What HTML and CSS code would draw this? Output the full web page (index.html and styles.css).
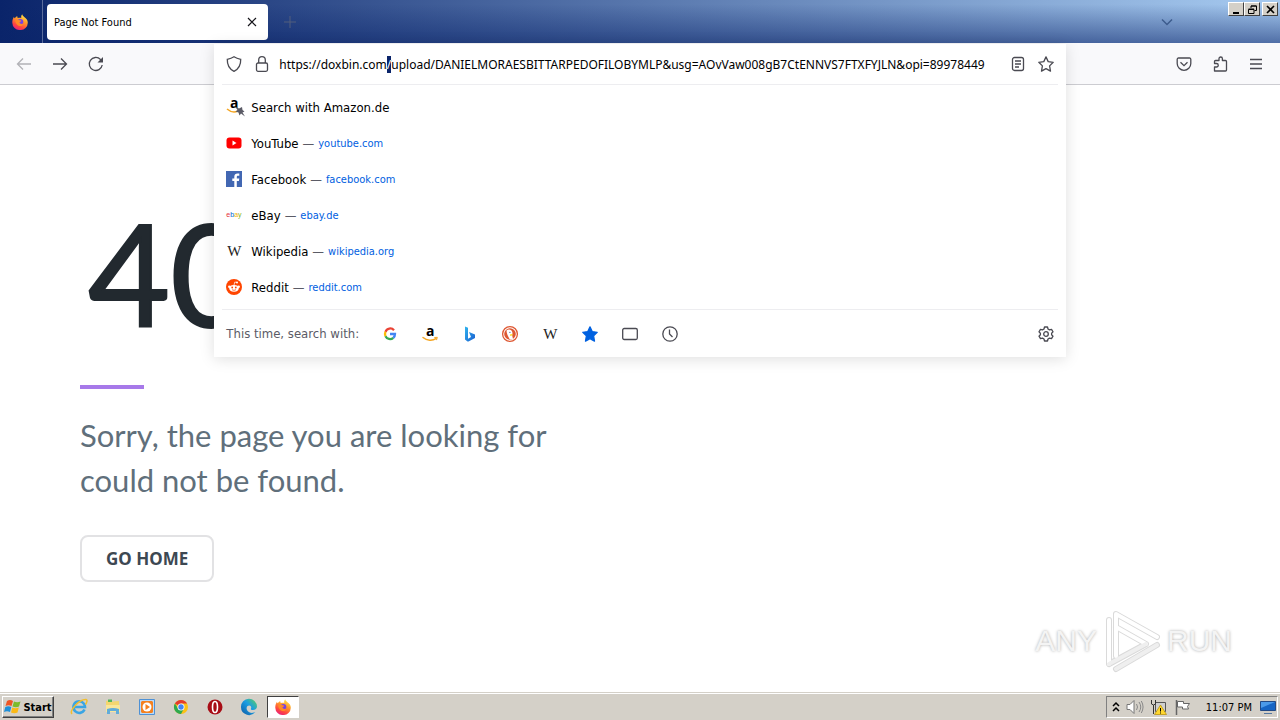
FILE: index.html
```html
<!DOCTYPE html>
<html lang="en">
<head>
    <meta charset="UTF-8">
    <meta name="viewport" content="width=device-width, initial-scale=1.0">
    <title>Page Not Found</title>
    <link rel="stylesheet" href="styles.css">
</head>
<body>
    <!-- Shared icons -->
    <svg class="defs" aria-hidden="true">
        <defs>
            <linearGradient id="flame" x1="0.8" y1="0" x2="0.3" y2="1">
                <stop offset="0" stop-color="#fff14f"/>
                <stop offset="0.4" stop-color="#ff9a2a"/>
                <stop offset="0.75" stop-color="#ff4640"/>
                <stop offset="1" stop-color="#e8207c"/>
            </linearGradient>
            <linearGradient id="bing-blue" x1="0" y1="0" x2="1" y2="1">
                <stop offset="0" stop-color="#2fb4ee"/>
                <stop offset="1" stop-color="#1b5fd0"/>
            </linearGradient>
            <linearGradient id="edge-blue" x1="0" y1="1" x2="1" y2="0">
                <stop offset="0" stop-color="#0c59a4"/>
                <stop offset="0.55" stop-color="#1b9de2"/>
                <stop offset="1" stop-color="#5fd35a"/>
            </linearGradient>
        </defs>
        <symbol id="firefox" viewBox="0 0 16 16">
            <path d="M10.2 0.3c0.2 1.2 1 1.900 2 2.600C14.500 4.500 15.800 6.200 15.800 8.800A7.700 7.200 0 0 1 0.300 8.800C0.200 6.500 0.900 4.200 2 2.700c0.100 0.800 0.300 1.200 0.700 1.600C3.500 3.400 4.300 2.500 5.200 2c0 0.900 0.200 1.500 0.700 2C7 3.500 8.700 3.500 9.300 4 8.900 2.700 9.200 1.300 10.200 0.300z" fill="url(#flame)"/>
            <circle cx="8.300" cy="8" r="3" fill="#7542e5"/>
            <path d="M3 6.500c1.600-1.400 3.300-1 4.600-0.200 1 0.100 1.800 0.200 1.700 0.700C9 7.700 7.800 7.700 7.500 8.500c0.400 1.400 2.300 1.900 4.200 0.700C11 12 8.300 12.700 6 11.400 4.300 10.400 3.600 8.500 3 6.500z" fill="#ff8a26"/>
        </symbol>
    </svg>

    <header class="titlebar">
        <button class="firefox-view" aria-label="Firefox View"><svg width="16" height="16"><use href="#firefox"/></svg></button>
        <div class="tab">
            <span>Page Not Found</span>
            <button class="tab-close" aria-label="Close tab"><svg width="10" height="10" viewBox="0 0 10 10"><path d="M1 1l8 8M9 1L1 9" stroke="#15141a" stroke-width="1.200"/></svg></button>
        </div>
        <button class="new-tab" aria-label="New tab"><svg width="12" height="12" viewBox="0 0 12 12"><path d="M6 0v12M0 6h12" stroke="#535f7c"/></svg></button>
        <button class="list-tabs" aria-label="List all tabs"><svg width="12" height="8" viewBox="0 0 12 8"><path d="M1 1.500l5 5 5-5" fill="none" stroke="#3d5c8d" stroke-width="1.500"/></svg></button>
        <div class="window-buttons">
            <button aria-label="Minimize"><svg width="9" height="9" viewBox="0 0 9 9"><path d="M1 7h6v2H1z"/></svg></button>
            <button aria-label="Restore"><svg width="9" height="9" viewBox="0 0 9 9"><path d="M3 3V1h5.500v4.500H6.500M3 1h5.500M0.500 4.500h5.500v4H0.500zM0.500 4h5.500" fill="none" stroke="#000"/></svg></button>
            <button class="close" aria-label="Close"><svg width="9" height="9" viewBox="0 0 9 9"><path d="M1 1l7 7M8 1L1 8" stroke="#000" stroke-width="1.600"/></svg></button>
        </div>
    </header>

    <nav class="toolbar">
        <div class="nav-buttons">
            <button class="back" aria-label="Back" disabled><svg width="16" height="16" viewBox="0 0 16 16"><path d="M15 8H1.500M7 2.500L1.500 8 7 13.500"/></svg></button>
            <button aria-label="Forward"><svg width="16" height="16" viewBox="0 0 16 16"><path d="M1 8h13.500M9 2.500L14.500 8 9 13.500"/></svg></button>
            <button aria-label="Reload"><svg width="16" height="16" viewBox="0 0 16 16"><path d="M14.200 9A6.500 6.500 0 1 1 12.500 3.500L14 5"/><path d="M15 1v5.500H9.500z" class="solid"/></svg></button>
        </div>
        <div class="urlbar-slot">
            <div class="urlbar">
                <div class="url-row">
                    <svg width="16" height="16" viewBox="0 0 16 16"><path d="M8 0.800c2 1.300 4 2 6.700 2.500C14.900 9 12.500 13.200 8 15.300 3.500 13.200 1.100 9 1.300 3.300 4 2.800 6 2.100 8 0.800z"/></svg>
                    <svg width="16" height="16" viewBox="0 0 16 16"><rect x="2.500" y="7" width="11" height="8.300" rx="1.500"/><path d="M4.700 7V4a3.300 3.300 0 0 1 6.600 0v3"/></svg>
                    <input type="text" id="url" aria-label="Address" spellcheck="false" value="https://doxbin.com/upload/DANIELMORAESBITTARPEDOFILOBYMLP&amp;usg=AOvVaw008gB7CtENNVS7FTXFYJLN&amp;opi=89978449">
                    <button aria-label="Reader view"><svg width="16" height="16" viewBox="0 0 16 16"><rect x="2.500" y="1.500" width="11" height="13" rx="2"/><path d="M5 5h6M5 8h6M5 11h4"/></svg></button>
                    <button aria-label="Bookmark this page"><svg width="16" height="16" viewBox="0 0 16 16"><path d="M8 0.900l2.200 4.700 5 0.700-3.600 3.600 0.900 5.200L8 12.600l-4.500 2.500 0.900-5.200L0.800 6.300l5-0.700z" stroke-linejoin="round"/></svg></button>
                </div>
                <ul class="results">
                    <li>
                        <svg class="pinned" width="20" height="20" viewBox="0 0 20 20"><text x="4" y="11" class="amazon-a">a</text><path d="M1 12c4 3.400 8 3.400 11 2" stroke="#f5a623" stroke-width="1.500"/><path d="M9 9.500l4 2 3-1.500 0.500 3 2 1.500-2 1 2.500 4-4-3-1.500 2-1-3-3-1 2-1.500z" fill="#5b5b66" stroke="none"/></svg>
                        <span class="title">Search with Amazon.de</span>
                    </li>
                    <li>
                        <svg width="16" height="16" viewBox="0 0 16 16"><rect x="0.500" y="2.500" width="15" height="11" rx="3" fill="#f00" stroke="none"/><path d="M6.500 5.500v5l4-2.500z" fill="#fff" stroke="none"/></svg>
                        <span class="title">YouTube</span><span class="dash">—</span><a href="https://youtube.com">youtube.com</a>
                    </li>
                    <li>
                        <svg width="16" height="16" viewBox="0 0 16 16"><path d="M0 0h16v16H0z" fill="#4267b2" stroke="none"/><path d="M8.300 16V10H6.300V7.500h2V5.700c0-2.200 1.300-3.300 3.200-3.300h1.800v2.300h-1.200c-1 0-1.300 0.500-1.300 1.200v1.600h2.500L12.900 10h-2.100v6z" fill="#fff" stroke="none"/></svg>
                        <span class="title">Facebook</span><span class="dash">—</span><a href="https://facebook.com">facebook.com</a>
                    </li>
                    <li>
                        <span class="ebay"><i>e</i><i>b</i><i>a</i><i>y</i></span>
                        <span class="title">eBay</span><span class="dash">—</span><a href="https://ebay.de">ebay.de</a>
                    </li>
                    <li>
                        <span class="wiki">W</span>
                        <span class="title">Wikipedia</span><span class="dash">—</span><a href="https://wikipedia.org">wikipedia.org</a>
                    </li>
                    <li>
                        <svg width="16" height="16" viewBox="0 0 16 16"><circle cx="8" cy="8" r="8" fill="#ff4500" stroke="none"/><g fill="#fff" stroke="none"><ellipse cx="8" cy="9.300" rx="4.700" ry="3.400"/><circle cx="3.300" cy="7.700" r="1.200"/><circle cx="12.700" cy="7.700" r="1.200"/><circle cx="11" cy="3.500" r="1"/></g><path d="M8 6l0.800-3 2.200 0.500" stroke="#fff" stroke-width="0.700"/><g fill="#ff4500" stroke="none"><circle cx="6.200" cy="8.500" r="0.900"/><circle cx="9.800" cy="8.500" r="0.900"/></g><path d="M6 10.700q2 1.300 4 0" stroke="#ff4500" stroke-width="0.700"/></svg>
                        <span class="title">Reddit</span><span class="dash">—</span><a href="https://reddit.com">reddit.com</a>
                    </li>
                </ul>
                <div class="one-offs">
                    <span class="label">This time, search with:</span>
                    <button aria-label="Google"><svg width="16" height="16" viewBox="0 0 16 16"><g stroke-width="2.300"><path d="M12 4.200A5 5 0 0 0 3.500 5.800" stroke="#ea4335"/><path d="M3.500 5.800a5 5 0 0 0 0 4.400" stroke="#fbbc05"/><path d="M3.500 10.200a5 5 0 0 0 7.800 1.600" stroke="#34a853"/><path d="M11.300 11.800A5 5 0 0 0 13 8H8" stroke="#4285f4"/></g></svg></button>
                    <button aria-label="Amazon.de"><svg width="16" height="16" viewBox="0 0 16 16"><text x="4" y="10" class="amazon-a">a</text><path d="M1 11.500c4 3.400 9.500 3.400 13 1.200" stroke="#f5a623" stroke-width="1.500" stroke-linecap="round"/><path d="M12.300 11.500l3-0.200-0.800 2.800" stroke="#f5a623" stroke-width="1"/></svg></button>
                    <button aria-label="Bing"><svg width="16" height="16" viewBox="0 0 16 16"><path d="M3 0.500l3 1.200v11l3-1.700L7 6l6 2.500v3.500l-6.500 3.500h-1l-2.500-2z" fill="url(#bing-blue)" stroke="none"/></svg></button>
                    <button aria-label="DuckDuckGo"><svg width="16" height="16" viewBox="0 0 16 16"><circle cx="8" cy="8" r="7.400" fill="#fff" stroke="#de5833"/><circle cx="8" cy="8" r="5.800" fill="#de5833" stroke="none"/><path d="M4.500 4.500c2-2 5.500-1.300 5.900 2 0.200 1.500-0.400 2.300-0.100 3.500l0.700 3c-1 0.500-2.500 0.500-3.400 0.200L5.500 9C5 7.500 4.500 6 4.500 4.500z" fill="#fff" stroke="none"/><path d="M8 8.500l3-0.400-1 1.300-2 0.300z" fill="#fdd20a" stroke="none"/><circle cx="7.900" cy="6.300" r="0.600" fill="#2d4f8e" stroke="none"/></svg></button>
                    <button aria-label="Wikipedia"><span class="wiki">W</span></button>
                    <button aria-label="Bookmarks"><svg width="16" height="16" viewBox="0 0 16 16"><path d="M8 0.900l2.200 4.700 5 0.700-3.600 3.600 0.900 5.200L8 12.600l-4.500 2.500 0.900-5.200L0.800 6.300l5-0.700z" fill="#0061e0" stroke="#0061e0" stroke-linejoin="round"/></svg></button>
                    <button aria-label="Tabs"><svg width="16" height="16" viewBox="0 0 16 16"><rect x="0.700" y="2.500" width="14.600" height="11" rx="1.500"/></svg></button>
                    <button aria-label="History"><svg width="16" height="16" viewBox="0 0 16 16"><circle cx="8" cy="8" r="7.200"/><path d="M7.500 3.500V8l3 3"/></svg></button>
                    <button class="settings" aria-label="Search settings"><svg width="16" height="16" viewBox="0 0 16 16"><circle cx="8" cy="8" r="2.300"/><path d="M6.500 1h3l0.500 2 1.500 0.900 2-0.600L15 5.900 13.600 7.300v1.500L15 10.200l-1.500 2.500-2-0.600L10 13l-0.500 2h-3L6 13l-1.500-0.900-2 0.600L1 10.200l1.400-1.400V7.300L1 5.900l1.500-2.600 2 0.600L6 3z" stroke-linejoin="round"/></svg></button>
                </div>
            </div>
        </div>
        <div class="tool-buttons">
            <button aria-label="Save to Pocket"><svg width="16" height="16" viewBox="0 0 16 16"><path d="M2.500 2h11a1.300 1.300 0 0 1 1.300 1.300V7.500a6.800 6.800 0 0 1-13.600 0V3.300A1.300 1.300 0 0 1 2.500 2z"/><path d="M4.500 6.300L8 9.700l3.500-3.400"/></svg></button>
            <button aria-label="Extensions"><svg width="16" height="16" viewBox="0 0 16 16"><path d="M2.500 15V11h2a1.700 1.700 0 0 0 0-3.500H2.500V5.500a1 1 0 0 1 1-1H7V2.700a1.700 1.700 0 0 1 3.400 0v1.800h3.100a1 1 0 0 1 1 1V14a1 1 0 0 1-1 1z" stroke-linejoin="round"/></svg></button>
            <button aria-label="Open application menu"><svg width="16" height="16" viewBox="0 0 16 16"><path d="M2 3.500h12M2 8h12M2 12.500h12"/></svg></button>
        </div>
    </nav>

    <main class="page">
        <div class="error">
            <h1>404</h1>
            <div class="divider"></div>
            <p>Sorry, the page you are looking for could not be found.</p>
            <button class="home">GO HOME</button>
        </div>
        <div class="watermark">
            <span>ANY</span>
            <svg width="62" height="66" viewBox="0 0 62 66" fill="none" stroke-linejoin="round" stroke-linecap="round">
                <g stroke="#dadada" stroke-width="6"><path d="M15 48V6l41 23M15 19l30 17-37 20V12M15 61l41-24"/></g>
                <g stroke="#fff" stroke-width="4"><path d="M15 48V6l41 23M15 19l30 17M8 56V12"/></g>
                <g stroke="#efefef" stroke-width="4"><path d="M45 36L8 56M15 61l41-24"/></g>
            </svg>
            <span>RUN</span>
        </div>
    </main>

    <footer class="taskbar">
        <button class="start">
            <svg width="18" height="18" viewBox="0 0 18 18"><path d="M3 3q3-2 6 0L7.500 8q-3-1.500-6 0z" fill="#ee5524"/><path d="M10 3.500q3 1.500 6.500 0L15 8.500q-3 1.500-6.500 0z" fill="#7cbb2c"/><path d="M1.300 9q3-1.500 6 0L6 14q-3-1.500-6 0z" fill="#1e8fd8"/><path d="M8.300 9.500q3 1.500 6.500 0L13.500 14.500q-3 1.500-6.500 0z" fill="#fbb915"/></svg>
            Start
        </button>
        <div class="apps">
            <button aria-label="Internet Explorer"><svg width="18" height="18" viewBox="0 0 18 18"><path d="M14.500 11.500A5.800 5.800 0 1 1 15 9H4" fill="none" stroke="#3aa5e4" stroke-width="2.600"/><path d="M2 16C-1 13 9 1 16 1.500c2 0.500 0.500 3.500-0.500 5" fill="none" stroke="#f2be2c" stroke-width="1.500"/></svg></button>
            <button aria-label="File Explorer"><svg width="18" height="18" viewBox="0 0 18 18"><path d="M2 3l5-1 1 1.500 7-0.500v10H2z" fill="#f4d66f"/><path d="M4 1.500h4V4H4z" fill="#53b65a"/><path d="M2 7h14v7H2z" fill="#f9e69a"/><path d="M3 16v-5q6-2 12 0v5h-3v-3H6v3z" fill="#62acd9"/></svg></button>
            <button aria-label="Media Player"><svg width="18" height="18" viewBox="0 0 18 18"><path d="M1.500 1.500h15v15h-15z" fill="#b9dafa" stroke="#4e91d5"/><path d="M4 3h10l1 1v10l-1 1H4l-1-1V4z" fill="#f48120"/><circle cx="9" cy="9" r="4.500" fill="#fff"/><path d="M7.500 6v6L12 9z" fill="#f48120"/></svg></button>
            <button aria-label="Chrome"><svg width="18" height="18" viewBox="0 0 18 18"><circle cx="9" cy="9" r="7" fill="#fbc116"/><path d="M9 9L2.900 5.500A7 7 0 0 1 15.100 5.500H9z" fill="#e33b2e"/><path d="M2.900 5.500A7 7 0 0 0 9 16l3-5.500H6z" fill="#2da94f"/><circle cx="9" cy="9" r="3.500" fill="#fff"/><circle cx="9" cy="9" r="2.700" fill="#4285f4"/></svg></button>
            <button aria-label="Opera"><svg width="18" height="18" viewBox="0 0 18 18"><circle cx="9" cy="9" r="7.500" fill="#a80d16"/><ellipse cx="9" cy="9" rx="2.500" ry="5.500" fill="#a80d16" stroke="#fff" stroke-width="1.600"/></svg></button>
            <button aria-label="Edge"><svg width="18" height="18" viewBox="0 0 18 18"><path d="M1 9a8 8 0 0 1 16-0.500c0 2.500-2 3.500-4 3.500s-2.500-0.700-2-1.500C12 8 9.500 6.500 7.500 8c-2 2-0.500 6 3 6.800 2 0.400 3.700-0.300 4.800-0.800A8 8 0 0 1 1 9z" fill="url(#edge-blue)"/></svg></button>
            <button class="active" aria-label="Firefox"><svg width="16" height="16"><use href="#firefox"/></svg></button>
        </div>
        <div class="tray">
            <svg width="8" height="12" viewBox="0 0 8 12"><path d="M1 5l3-3 3 3M1 10l3-3 3 3" fill="none" stroke="#000" stroke-width="1.500"/></svg>
            <svg width="18" height="16" viewBox="0 0 18 16"><path d="M1 5.500h3L8 1.500v13l-4-4H1z" fill="#fff" stroke="#777"/><path d="M10.500 5q2 3 0 6M13 3q3.500 5 0 10M15.300 2q3.500 6 0 12" fill="none" stroke="#888"/></svg>
            <svg width="18" height="16" viewBox="0 0 18 16"><path d="M5.500 3.500h10v9h-10z" fill="#cfcfcf" stroke="#555"/><path d="M1.500 1v4q2 2 4 0V1M3.500 6v9" fill="none" stroke="#333"/><path d="M10.500 6l6 9.500h-12z" fill="#ffd72e" stroke="#b58b00" stroke-width="0.700"/><path d="M10.500 9v3.500M10.500 13.500v1" stroke="#000"/></svg>
            <svg width="18" height="16" viewBox="0 0 18 16"><path d="M2.500 1v15" stroke="#666" stroke-width="1.500"/><path d="M3.500 2.500h6v2h6l-2 3 1 2.500h-6V8h-5z" fill="#fff" stroke="#666"/></svg>
            <time>11:07 PM</time>
            <svg width="16" height="16" viewBox="0 0 16 16"><path d="M0.500 2.500h15v9H0.500z" fill="#1665c4" stroke="#234a85"/><path d="M1 3h14L1 9z" fill="#4b9ae9"/><path d="M4 14.500h8" stroke="#56789f"/></svg>
        </div>
    </footer>

    <script>
        // Select the slash after the host name
        const url = document.getElementById('url');
        const slash = url.value.indexOf('/', 8);
        url.focus();
        url.setSelectionRange(slash, slash + 1);
        url.scrollLeft = 0;
    </script>
</body>
</html>
```
FILE: styles.css
```css
* {
    box-sizing: border-box;
}
body {
    display: flex;
    flex-direction: column;
    min-height: 100vh;
    margin: 0;
    background-color: #fff;
    color: #000;
    font-family: "DejaVu Sans Condensed", "Noto Sans", sans-serif;
    font-size: 11px;
}
button {
    display: flex;
    align-items: center;
    justify-content: center;
    padding: 0;
    border: 0;
    background: none;
    color: inherit;
    font: inherit;
}
svg {
    flex: none;
    overflow: visible;
}
.defs {
    position: absolute;
    width: 0;
    height: 0;
}
.amazon-a {
    font: bold 14px "Open Sans", sans-serif;
    fill: #000;
    stroke: none;
}
.wiki {
    width: 16px;
    color: #222;
    font: 15px/16px "Liberation Serif", serif;
    text-align: center;
}
.ebay {
    display: flex;
    width: 16px;
    font: 7px/16px "Liberation Sans", sans-serif;
}
.ebay i {
    color: #e53238;
    font-style: normal;
}
.ebay i:nth-child(2) {
    color: #0064d2;
}
.ebay i:nth-child(3) {
    color: #f5af02;
}
.ebay i:nth-child(4) {
    color: #86b817;
}

/* Title bar */
.titlebar {
    display: flex;
    height: 43px;
    background: linear-gradient(to bottom, rgba(10, 36, 106, 0) 10%, rgba(10, 36, 106, 0.55)), linear-gradient(to right, #0a246a, #a6caf0);
}
.firefox-view {
    width: 43px;
    padding-right: 3px;
    border-right: 1px solid #5a6c9c;
}
.tab {
    display: flex;
    align-items: center;
    justify-content: space-between;
    width: 221px;
    margin: 4px 4px 3px;
    padding: 0 8px 0 7px;
    border-radius: 4px;
    background-color: #fff;
}
.tab-close {
    width: 16px;
    height: 16px;
}
.new-tab {
    width: 36px;
}
.list-tabs {
    width: 24px;
    margin-left: auto;
}
.window-buttons {
    display: flex;
    align-items: flex-start;
    margin: 2px 2px 0 49px;
}
.window-buttons button {
    width: 16px;
    height: 14px;
    border: 1px solid;
    border-color: #fff #404040 #404040 #fff;
    background-color: #d4d0c8;
}
.window-buttons .close {
    margin-left: 2px;
}

/* Toolbar and address bar */
.toolbar {
    display: grid;
    grid-template-columns: 1fr 4fr 1fr;
    height: 42px;
    border-bottom: 1px solid #ccccd1;
    background-color: #f9f9fb;
}
.toolbar svg {
    fill: none;
    stroke: #4a4a52;
    stroke-width: 1.3;
}
.toolbar .solid {
    fill: #4a4a52;
    stroke: none;
}
.nav-buttons, .tool-buttons {
    display: flex;
    align-items: center;
    gap: 20px;
    padding: 0 16px;
}
.tool-buttons {
    justify-content: flex-end;
}
.back {
    opacity: 0.4;
}
.urlbar-slot {
    position: relative;
}
.urlbar {
    position: absolute;
    top: 1px;
    left: 1px;
    right: 1px;
    z-index: 2;
    padding: 0 8px;
    background-color: #fff;
    box-shadow: 0 2px 14px rgba(0, 0, 0, 0.13);
}
.url-row {
    display: flex;
    align-items: center;
    gap: 12px;
    height: 41px;
    padding: 0 4px;
    border-bottom: 1px solid #ededf0;
}
.url-row input {
    flex: 1;
    min-width: 0;
    height: 20px;
    margin-left: -3px;
    padding: 0;
    border: 0;
    outline: 0;
    background: none;
    color: #000;
    font-family: "Noto Sans", sans-serif;
    font-size: 12px;
}
.url-row input::selection {
    background-color: #0a246a;
    color: #fff;
}
.results {
    margin: 0;
    padding: 4px;
    border-bottom: 1px solid #ededf0;
    list-style: none;
}
.results li {
    display: flex;
    align-items: center;
    height: 36px;
}
.title {
    margin-left: 9px;
    font-size: 13px;
}
.pinned + .title {
    margin-left: 5px;
}
.dash {
    margin: 0 4px;
    color: #5b5b66;
    font-size: 13px;
}
.results a {
    color: #0060df;
    text-decoration: none;
}
.one-offs {
    display: flex;
    align-items: center;
    gap: 24px;
    height: 47px;
    padding: 0 4px;
}
.label {
    width: 132px;
    color: #5b5b66;
    font-size: 13px;
    white-space: nowrap;
}
.settings {
    margin-left: auto;
}

/* Error page */
.page {
    position: relative;
    display: flex;
    align-items: center;
    flex: 1;
    padding: 0 80px;
}
.error {
    max-width: 480px;
    color: #606f7b;
    font-family: Lato, sans-serif;
}
h1 {
    margin: 0;
    padding-left: 8px;
    color: #22292f;
    font-size: 142px;
    font-weight: 400;
    line-height: 154px;
    -webkit-text-stroke: 2px #22292f;
}
.divider {
    width: 64px;
    height: 4px;
    margin: 36px 0 24px;
    background-color: #a779e9;
}
.error p {
    margin: 0 0 32px;
    font-size: 31px;
    line-height: 45px;
}
.home {
    height: 47px;
    padding: 0 24px;
    border: 2px solid #e2e2e4;
    border-radius: 8px;
    color: #3d4852;
    font-family: "Noto Sans", sans-serif;
    font-size: 17px;
    font-weight: 700;
}
.watermark {
    position: absolute;
    right: 48px;
    bottom: 18px;
    display: flex;
    align-items: center;
    gap: 4px;
    color: #f4f4f4;
    font-family: "Liberation Sans Narrow", "Liberation Sans", sans-serif;
    font-size: 30px;
    text-shadow: 0 0 3px #aaa;
}

/* Taskbar */
.taskbar {
    display: flex;
    align-items: center;
    height: 28px;
    padding: 1px 2px 0;
    border-top: 1px solid #d4d0c8;
    background-color: #d4d0c8;
    box-shadow: inset 0 1px #fff;
}
.start {
    gap: 1px;
    width: 52px;
    height: 22px;
    border: 1px solid;
    border-color: #fff #404040 #404040 #fff;
    box-shadow: inset -1px -1px #808080;
    font-weight: 700;
}
.apps {
    display: flex;
    gap: 2px;
    margin-left: 9px;
}
.apps button {
    width: 32px;
    height: 22px;
}
.apps .active {
    border: 1px solid;
    border-color: #404040 #fff #fff #404040;
    background-color: #fff;
}
.tray {
    display: flex;
    align-items: center;
    gap: 6px;
    height: 22px;
    margin-left: auto;
    padding: 0 1px 0 5px;
    border: 1px solid;
    border-color: #808080 #fff #fff #808080;
}
.tray time {
    margin: 0 2px 0 8px;
}
```
